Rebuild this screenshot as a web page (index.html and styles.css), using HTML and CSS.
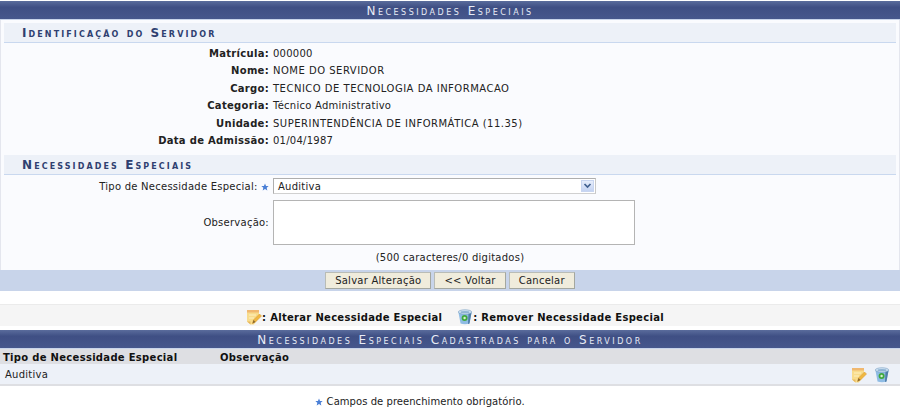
FILE: index.html
```html
<!DOCTYPE html>
<html>
    <head>
        <title>Necessidades Especiais</title>
        <link rel="stylesheet" href="styles.css">
    </head>

    <body>
        <svg class="ICON_DEFS" width="0" height="0">
            <symbol id="star" viewBox="0 0 10 10">
                <path d="M5 .5 6.3 3.6 9.6 3.9 7.1 6 7.9 9.4 5 7.6 2.1 9.4 2.9 6 .4 3.9 3.7 3.6Z" fill="#4a7fd6"/>
            </symbol>
            <symbol id="edit" viewBox="0 0 16 16">
                <path d="M1 1.5H13V8L8 15.5H4.5L1 12.5Z" fill="#f8dc8c"/>
                <path d="M1 1H13V3.5H1Z" fill="#f0b870"/>
                <path d="M1 12.5 4.5 15.5V12.5Z" fill="#e8b860"/>
                <path d="M3 6H10M3 9H8" stroke="#fdf0c0" stroke-width="1"/>
                <path d="M6.5 14.5 7.5 11 13.5 5 15.5 7 9.5 13Z" fill="#f0b840" stroke="#d8a040" stroke-width=".6"/>
                <path d="M6.5 14.5 7.5 11 9.5 13Z" fill="#8a6a30"/>
            </symbol>
            <symbol id="trash" viewBox="0 0 16 16">
                <path d="M1.5 3.5 3.5 14.5Q8 16 12.5 14.5L14.5 3.5Z" fill="#8fbce4"/>
                <path d="M11.5 4 11 15 12.5 14.5 14.5 3.5Z" fill="#4f7ea9"/>
                <ellipse cx="8" cy="3" rx="6.7" ry="2.2" fill="#d8e8f6" stroke="#6d97bd" stroke-width=".6"/>
                <ellipse cx="8" cy="3.2" rx="4.6" ry="1.1" fill="#8fb4d4"/>
                <circle cx="7.6" cy="9" r="3" fill="#3fa83c"/>
                <circle cx="7.6" cy="9" r="1.2" fill="#d8f0d2"/>
            </symbol>
        </svg>

        <!--Form with server data-->
        <div class="CAPTION">Necessidades Especiais</div>
        <div class="FORM_PANEL">
            <div class="SUBTITLE">Identificação do Servidor</div>
            <div class="INFO_ROWS">
                <div class="INFO_LABEL">Matrícula:</div><div>000000</div>
                <div class="INFO_LABEL">Nome:</div><div class="INFO_CAPS">NOME DO SERVIDOR</div>
                <div class="INFO_LABEL">Cargo:</div><div class="INFO_CAPS">TECNICO DE TECNOLOGIA DA INFORMACAO</div>
                <div class="INFO_LABEL">Categoria:</div><div>Técnico Administrativo</div>
                <div class="INFO_LABEL">Unidade:</div><div class="INFO_CAPS">SUPERINTENDÊNCIA DE INFORMÁTICA (11.35)</div>
                <div class="INFO_LABEL">Data de Admissão:</div><div>01/04/1987</div>
            </div>

            <div class="SUBTITLE SUBTITLE_SECOND">Necessidades Especiais</div>
            <div class="FIELD_ROW FIELD_SELECT">
                <div class="FIELD_LABEL">Tipo de Necessidade Especial: <svg class="STAR"><use href="#star"/></svg></div>
                <div class="SELECT_BOX">
                    <span>Auditiva</span>
                    <span class="SELECT_ARROW">
                        <svg width="9" height="6" viewBox="0 0 9 6"><path d="M1.5 1 4.5 4 7.5 1" fill="none" stroke="#41608f" stroke-width="1.7"/></svg>
                    </span>
                </div>
            </div>
            <div class="FIELD_ROW FIELD_TEXT">
                <div class="FIELD_LABEL">Observação:</div>
                <div class="TEXT_BOX"></div>
            </div>
            <div class="COUNTER">(500 caracteres/0 digitados)</div>

            <!--Buttons-->
            <div class="BUTTON_BAR">
                <div class="BUTTON">Salvar Alteração</div>
                <div class="BUTTON">&lt;&lt; Voltar</div>
                <div class="BUTTON">Cancelar</div>
            </div>
        </div>

        <!--Legend of the icons-->
        <div class="LEGEND">
            <svg class="ICON"><use href="#edit"/></svg><span>: Alterar Necessidade Especial</span>
            <svg class="ICON ICON_SECOND"><use href="#trash"/></svg><span>: Remover Necessidade Especial</span>
        </div>

        <div class="CAPTION">Necessidades Especiais Cadastradas para o Servidor</div>
        <div class="TABLE_HEAD">
            <div class="COL_TYPE">Tipo de Necessidade Especial</div>
            <div>Observação</div>
        </div>
        <div class="TABLE_ROW">
            <div class="ROW_NAME">Auditiva</div>
            <svg class="ICON"><use href="#edit"/></svg>
            <svg class="ICON ROW_TRASH"><use href="#trash"/></svg>
        </div>

        <div class="REQUIRED_NOTE">
            <svg class="STAR"><use href="#star"/></svg> Campos de preenchimento obrigatório.
        </div>
    </body>
</html>
```

FILE: styles.css
```css
/*SIGAA blue: #415080*/
html, body {
    overflow: hidden;
}
body {
    margin: 0;
    padding-top: 1px;
    font-family: "DejaVu Sans", sans-serif;
    font-size: 10px;
    letter-spacing: .25px;
    color: #222;
    background-color: white;
}
.ICON_DEFS {
    display: block;
}
/*Dark blue title bars*/
.CAPTION {
    height: 18px;
    line-height: 20px;
    text-align: center;
    font-size: 12px;
    font-variant: small-caps;
    letter-spacing: 2.5px;
    color: #e8ecf6;
    background: linear-gradient(#5a6c9c, #3f4f84 35%, #46578c);
    border-bottom: 1px solid #c8d4ea;
}
.FORM_PANEL {
    background-color: #fafbfe;
    border-left: 1px solid #e4e6ee;
    border-right: 1px solid #e4e6ee;
    padding-top: 3px;
}
/*Section titles inside the panel*/
.SUBTITLE {
    height: 19px;
    line-height: 21px;
    margin: 0 3px;
    padding-left: 18px;
    font-size: 12px;
    font-weight: bold;
    font-variant: small-caps;
    letter-spacing: 2.1px;
    color: #2f3f70;
    background-color: #edf1f8;
    border-bottom: 1px solid #c9d8ef;
}
.SUBTITLE_SECOND {
    margin-top: 6px;
}
.INFO_ROWS {
    display: grid;
    grid-template-columns: 268px 1fr;
    column-gap: 4px;
    grid-auto-rows: 17.4px;
    line-height: 17.4px;
    padding-top: 2px;
}
.INFO_LABEL {
    text-align: right;
    font-weight: bold;
    letter-spacing: .3px;
}
.INFO_CAPS {
    letter-spacing: .5px;
}
.FIELD_ROW {
    display: grid;
    grid-template-columns: 268px 1fr;
    column-gap: 4px;
    align-items: center;
}
.FIELD_LABEL {
    text-align: right;
}
.FIELD_SELECT {
    margin-top: 3px;
}
.FIELD_TEXT {
    margin-top: 6px;
}
.STAR {
    width: 8px;
    height: 8px;
    vertical-align: -1px;
}
.SELECT_BOX {
    display: flex;
    justify-content: space-between;
    align-items: center;
    box-sizing: border-box;
    width: 323px;
    height: 16px;
    padding-left: 4px;
    background-color: white;
    border: 1px solid #aeaeae;
    border-right-color: #c8c8c8;
    border-bottom-color: #d0d0d0;
}
.SELECT_ARROW {
    display: flex;
    justify-content: center;
    align-items: center;
    width: 13px;
    height: 12px;
    margin-right: 1px;
    background: linear-gradient(#e6edfb, #c4d3f2);
    border: 1px solid #c8d5f0;
    box-sizing: border-box;
}
.TEXT_BOX {
    box-sizing: border-box;
    width: 362px;
    height: 45px;
    background-color: white;
    border: 1px solid #b4b4b4;
}
.COUNTER {
    height: 25px;
    line-height: 26px;
    text-align: center;
}
.BUTTON_BAR {
    display: flex;
    justify-content: center;
    gap: 3px;
    height: 21px;
    padding-top: 2px;
    box-sizing: border-box;
    background-color: #c8d4ea;
    margin: 0 -1px;
}
.BUTTON {
    box-sizing: border-box;
    height: 17px;
    line-height: 15px;
    padding: 0 9px;
    background-color: #f0ecdc;
    border: 1px solid #b9bcb6;
    border-right-color: #a4a79f;
    border-bottom-color: #a4a79f;
}
/*Legend bar*/
.LEGEND {
    display: flex;
    justify-content: center;
    align-items: center;
    height: 22px;
    margin-top: 13px;
    margin-bottom: 4px;
    padding-left: 10px;
    padding-top: 2px;
    font-weight: bold;
    letter-spacing: .3px;
    color: #111;
    background-color: #f5f5f5;
    border-top: 1px solid #ebebeb;
    box-sizing: border-box;
}
.LEGEND span {
    padding-top: 2px;
}
.ICON {
    flex: none;
    width: 16px;
    height: 16px;
}
.ICON_SECOND {
    margin-left: 15px;
}
/*Table of saved items*/
.TABLE_HEAD {
    display: flex;
    height: 15px;
    line-height: 17px;
    padding-left: 3px;
    font-weight: bold;
    letter-spacing: .3px;
    color: #111;
    background-color: #dedfe3;
}
.COL_TYPE {
    width: 217px;
}
.TABLE_ROW {
    display: flex;
    align-items: center;
    box-sizing: border-box;
    height: 22px;
    padding: 1px 10px 0 5px;
    background-color: #edf1f8;
    border-bottom: 2px solid #dedfe3;
}
.ROW_NAME {
    flex: 1;
}
.ROW_TRASH {
    margin-left: 7px;
}
.REQUIRED_NOTE {
    margin-top: 10px;
    padding-right: 60px;
    text-align: center;
    letter-spacing: .05px;
}
```
